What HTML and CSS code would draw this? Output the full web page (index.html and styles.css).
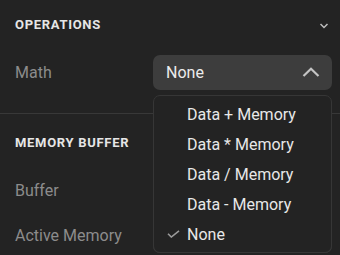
FILE: index.html
```html
<!DOCTYPE html>
<html>
<head>
<meta charset="utf-8">
<link rel="stylesheet" href="styles.css">
</head>
<body>
<div class="panel">
  <section class="section first">
    <div class="section-head">
      <span class="section-title">OPERATIONS</span>
      <svg class="collapse" width="16" height="10" viewBox="0 0 16 10"><path d="M4.5 3 L8 6.5 L11.5 3" fill="none" stroke="#bdbdbd" stroke-width="1.5"/></svg>
    </div>
    <div class="rows">
      <div class="row">
        <span class="label">Math</span>
        <div class="select open">
          <span class="value">None</span>
          <svg class="chev" width="18" height="10" viewBox="0 0 18 10"><path d="M1.5 9 L9 1.8 L16.5 9" fill="none" stroke="#c4c4c4" stroke-width="2.2"/></svg>
          <ul class="menu">
            <li class="item">Data + Memory</li>
            <li class="item">Data * Memory</li>
            <li class="item">Data / Memory</li>
            <li class="item">Data - Memory</li>
            <li class="item checked"><svg class="check" width="13" height="8" viewBox="0 0 13 8"><path d="M1 3.8 L4.3 7 L12 0.8" fill="none" stroke="#9a9a9a" stroke-width="1.6"/></svg>None</li>
          </ul>
        </div>
      </div>
    </div>
  </section>
  <section class="section second">
    <div class="section-head">
      <span class="section-title">MEMORY BUFFER</span>
    </div>
    <div class="rows">
      <div class="row">
        <span class="label">Buffer</span>
        <div class="select"><span class="value">Off</span></div>
      </div>
      <div class="row">
        <span class="label">Active Memory</span>
        <div class="select"><span class="value">1</span></div>
      </div>
    </div>
  </section>
</div>
</body>
</html>
```

FILE: styles.css
```css
html, body {
  margin: 0;
  padding: 0;
  background: #232323;
}
body {
  width: 340px;
  height: 255px;
  overflow: hidden;
  font-family: Roboto, "Liberation Sans", sans-serif;
}
.panel {
  display: flex;
  flex-direction: column;
}
.section {
  padding: 15px 8px 23px 15px;
  display: flex;
  flex-direction: column;
  gap: 20px;
}
.section.first {
  border-bottom: 1px solid #383838;
}
.section.second {
  padding-top: 19px;
  padding-bottom: 0;
}
.section-head {
  display: flex;
  align-items: center;
  justify-content: space-between;
  height: 20px;
}
.section-title {
  font-size: 13px;
  line-height: 20px;
  font-weight: 700;
  letter-spacing: 0.7px;
  color: #e6e6e6;
}
.collapse {
  margin-top: 1px;
}
.rows {
  display: flex;
  flex-direction: column;
  gap: 10px;
}
.row {
  display: flex;
  align-items: center;
  justify-content: space-between;
  height: 35px;
}
.label {
  font-size: 16px;
  color: #8c8c8c;
}
.select {
  position: relative;
  box-sizing: border-box;
  width: 179px;
  height: 35px;
  border-radius: 7px;
  background: #3d3d3d;
  display: flex;
  align-items: center;
  justify-content: space-between;
  padding: 0 12px 0 13px;
}
.value {
  font-size: 16px;
  color: #ececec;
}
.chev {
  margin-top: -1px;
}
.menu {
  position: absolute;
  top: 40px;
  left: 0;
  width: 179px;
  box-sizing: border-box;
  margin: 0;
  padding: 4px 0 2px;
  list-style: none;
  background: #232323;
  border: 1px solid #363636;
  border-radius: 7px;
  z-index: 5;
}
.item {
  position: relative;
  height: 30px;
  line-height: 30px;
  padding-left: 33px;
  font-size: 16px;
  color: #e8e8e8;
}
.check {
  position: absolute;
  left: 13px;
  top: 10px;
}
```
